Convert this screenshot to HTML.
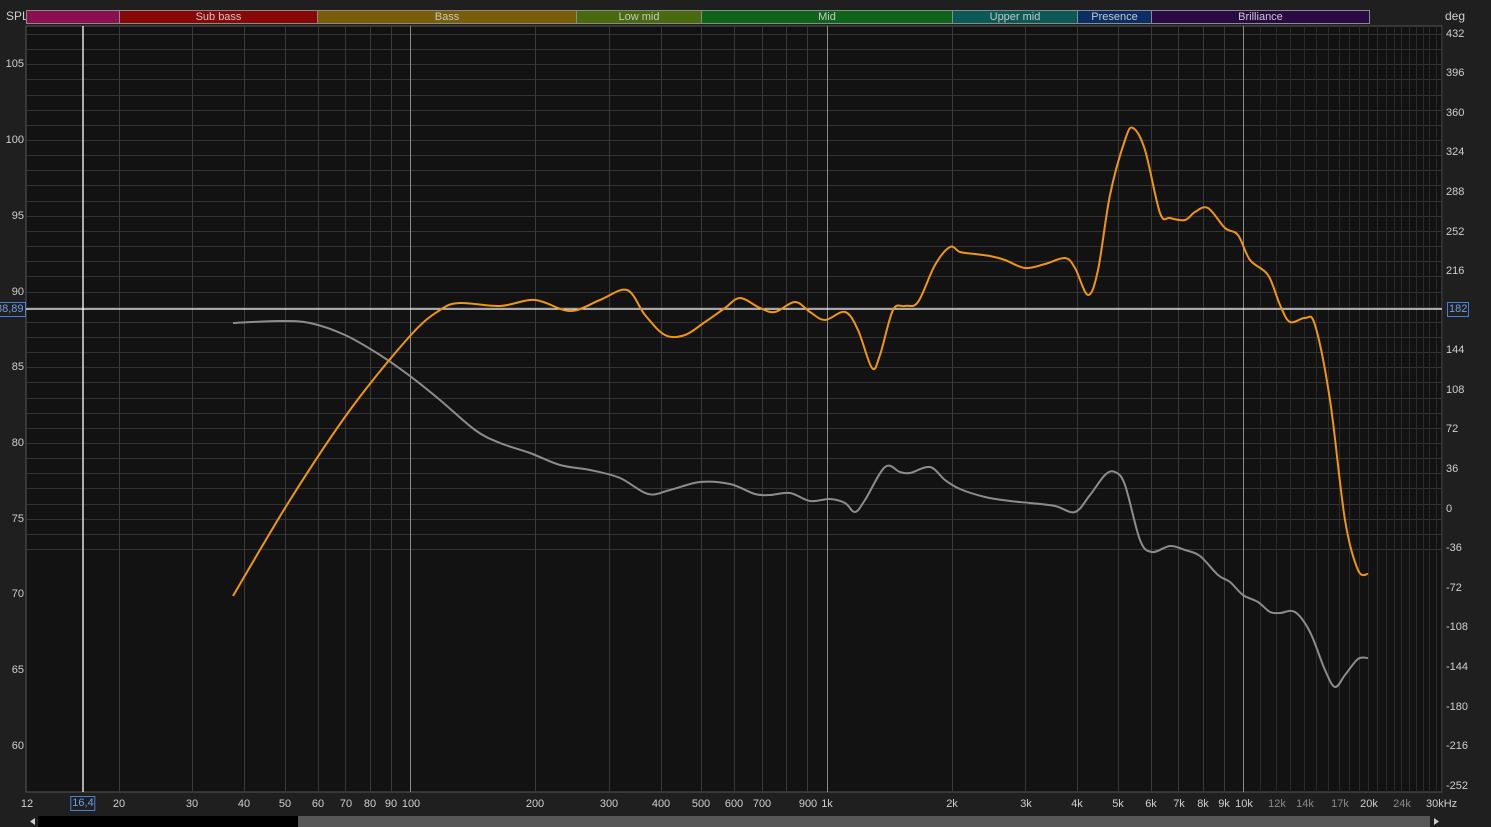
<!DOCTYPE html>
<html><head><meta charset="utf-8"><style>
html,body{margin:0;padding:0;background:#1f1f1f;width:1491px;height:827px;overflow:hidden;font-family:"Liberation Sans",sans-serif;}
.l{position:absolute;font-size:11px;color:#cfcfcf;line-height:12px;white-space:nowrap}
.ly{right:1467px;text-align:right}
.ry{left:1446px}
.bx{transform:translateX(-50%)}
.band{position:absolute;top:10px;height:12px;border:1px solid #8a8a8a;box-sizing:content-box;color:#c8c8c8;font-size:11px;line-height:12px;text-align:center}
.box{position:absolute;border:1px solid #4a7fd6;color:#6f9ee8;font-size:11px;line-height:13px;padding:0 1px;background:#1f1f1f}
.dim{color:#8a8a8a}
</style></head><body>
<svg id="g" width="1491" height="827" style="position:absolute;left:0;top:0">
<rect x="26" y="26" width="1416" height="766" fill="#121212" stroke="#555" stroke-width="1"/>
<g id="grid"></g>
<line x1="26" y1="309" x2="1442" y2="309" stroke="#fff" stroke-width="1.3"/>
<line x1="83" y1="26" x2="83" y2="792" stroke="#fff" stroke-width="1.3"/>
<path id="gray" fill="none" stroke="#8c8c8c" stroke-width="2"/>
<path id="orange" fill="none" stroke="#f0960f" stroke-width="2"/>
<rect x="38" y="816" width="260" height="11" fill="#000"/>
<rect x="298" y="816" width="1132" height="11" fill="#575757"/>
<polygon points="35,818 35,825 30,821.5" fill="#ccc"/>
<polygon points="1434,818 1434,825 1439,821.5" fill="#ccc"/>
</svg>
<div class="l" style="left:6px;top:10px;font-size:12px">SPL</div>
<div class="l" style="left:1445px;top:10px;font-size:12px">deg</div>
<div class="band" style="left:26px;width:92px;background:#8c0f4f"></div>
<div class="band" style="left:119px;width:197px;background:#880808">Sub bass</div>
<div class="band" style="left:317px;width:258px;background:#7a5d08">Bass</div>
<div class="band" style="left:576px;width:124px;background:#4a6a0e">Low mid</div>
<div class="band" style="left:701px;width:250px;background:#0e651a">Mid</div>
<div class="band" style="left:952px;width:124px;background:#0b5a55">Upper mid</div>
<div class="band" style="left:1077px;width:73px;background:#0b2e66">Presence</div>
<div class="band" style="left:1151px;width:217px;background:#2a0a45">Brilliance</div>

<div class="l ly" style="top:58px">105</div>
<div class="l ly" style="top:134px">100</div>
<div class="l ly" style="top:210px">95</div>
<div class="l ly" style="top:286px">90</div>
<div class="l ly" style="top:361px">85</div>
<div class="l ly" style="top:437px">80</div>
<div class="l ly" style="top:513px">75</div>
<div class="l ly" style="top:588px">70</div>
<div class="l ly" style="top:664px">65</div>
<div class="l ly" style="top:740px">60</div>
<div class="box" style="left:-6px;top:302px">88,89</div>

<div class="l ry" style="top:28px">432</div>
<div class="l ry" style="top:67px">396</div>
<div class="l ry" style="top:107px">360</div>
<div class="l ry" style="top:146px">324</div>
<div class="l ry" style="top:186px">288</div>
<div class="l ry" style="top:226px">252</div>
<div class="l ry" style="top:265px">216</div>
<div class="box" style="left:1447px;top:302px">182</div>
<div class="l ry" style="top:344px">144</div>
<div class="l ry" style="top:384px">108</div>
<div class="l ry" style="top:423px">72</div>
<div class="l ry" style="top:463px">36</div>
<div class="l ry" style="top:503px">0</div>
<div class="l ry" style="top:542px">-36</div>
<div class="l ry" style="top:582px">-72</div>
<div class="l ry" style="top:621px">-108</div>
<div class="l ry" style="top:661px">-144</div>
<div class="l ry" style="top:701px">-180</div>
<div class="l ry" style="top:740px">-216</div>
<div class="l ry" style="top:780px">-252</div>

<div class="l bx" style="left:27px;top:798px">12</div>
<div class="box bx" style="left:83px;top:796px">16,4</div>
<div class="l bx" style="left:119px;top:798px">20</div>
<div class="l bx" style="left:192px;top:798px">30</div>
<div class="l bx" style="left:244px;top:798px">40</div>
<div class="l bx" style="left:285px;top:798px">50</div>
<div class="l bx" style="left:318px;top:798px">60</div>
<div class="l bx" style="left:346px;top:798px">70</div>
<div class="l bx" style="left:370px;top:798px">80</div>
<div class="l bx" style="left:391px;top:798px">90</div>
<div class="l bx" style="left:411px;top:798px">100</div>
<div class="l bx" style="left:535px;top:798px">200</div>
<div class="l bx" style="left:609px;top:798px">300</div>
<div class="l bx" style="left:661px;top:798px">400</div>
<div class="l bx" style="left:701px;top:798px">500</div>
<div class="l bx" style="left:734px;top:798px">600</div>
<div class="l bx" style="left:762px;top:798px">700</div>
<div class="l bx" style="left:808px;top:798px">900</div>
<div class="l bx" style="left:827px;top:798px">1k</div>
<div class="l bx" style="left:952px;top:798px">2k</div>
<div class="l bx" style="left:1026px;top:798px">3k</div>
<div class="l bx" style="left:1077px;top:798px">4k</div>
<div class="l bx" style="left:1118px;top:798px">5k</div>
<div class="l bx" style="left:1151px;top:798px">6k</div>
<div class="l bx" style="left:1179px;top:798px">7k</div>
<div class="l bx" style="left:1203px;top:798px">8k</div>
<div class="l bx" style="left:1224px;top:798px">9k</div>
<div class="l bx" style="left:1244px;top:798px">10k</div>
<div class="l bx dim" style="left:1277px;top:798px">12k</div>
<div class="l bx dim" style="left:1305px;top:798px">14k</div>
<div class="l bx dim" style="left:1340px;top:798px">17k</div>
<div class="l bx" style="left:1369px;top:798px">20k</div>
<div class="l bx dim" style="left:1402px;top:798px">24k</div>
<div class="l" style="left:1426px;top:798px">30kHz</div>

<script>
var NS="http://www.w3.org/2000/svg",g=document.getElementById("grid");
function ln(x1,y1,x2,y2,c){var e=document.createElementNS(NS,"line");e.setAttribute("x1",x1);e.setAttribute("y1",y1);e.setAttribute("x2",x2);e.setAttribute("y2",y2);e.setAttribute("stroke",c);e.setAttribute("stroke-width","1");g.appendChild(e);}
function fx(f){return 410+416.5*Math.log10(f/100);}
for(var d=-17;d<=50;d++){var y=Math.round(291.5-(d)*15.15)+0.5; if(y>26&&y<792) ln(26,y,1442,y,"#333");}
var fs=[];for(var f=20;f<=90;f+=10)fs.push(f);for(f=200;f<=900;f+=100)fs.push(f);for(f=2000;f<=9000;f+=1000)fs.push(f);for(f=11000;f<=30000;f+=1000)fs.push(f);
fs.forEach(function(f){var x=Math.round(fx(f))+0.5;ln(x,26,x,792,f>=11000?"#2c2c2c":"#3a3a3a");});
[100,1000,10000].forEach(function(f){var x=Math.round(fx(f))+0.5;ln(x,26,x,792,"#8a8a8a");});
function cr(p){var s="M"+p[0][0]+","+p[0][1];for(var i=0;i<p.length-1;i++){var p0=p[i-1]||p[i],p1=p[i],p2=p[i+1],p3=p[i+2]||p2;s+=" C"+(p1[0]+(p2[0]-p0[0])/6)+","+(p1[1]+(p2[1]-p0[1])/6)+" "+(p2[0]-(p3[0]-p1[0])/6)+","+(p2[1]-(p3[1]-p1[1])/6)+" "+p2[0]+","+p2[1];}return s;}
var O=[[233,596],[290,500],[350,410],[410,336],[440,310],[460,303],[500,306],[535,300],[570,311],[600,300],[627,290],[645,315],[665,335],[685,335],[705,322],[725,308],[740,298],[760,308],[775,312],[795,302],[810,312],[825,320],[845,312],[858,330],[872,368],[880,355],[893,310],[905,306],[918,302],[935,265],[950,247],[960,252],[975,254],[990,256],[1005,260],[1025,268],[1045,264],[1065,258],[1075,268],[1088,295],[1098,270],[1110,195],[1125,140],[1133,128],[1145,150],[1160,213],[1170,218],[1185,220],[1195,212],[1208,208],[1225,228],[1238,235],[1250,260],[1268,275],[1280,305],[1290,322],[1305,318],[1315,325],[1330,400],[1345,520],[1358,570],[1368,574]];
var G=[[233,323],[280,321],[310,323],[345,335],[380,355],[410,376],[440,400],[475,430],[500,443],[530,453],[560,465],[590,470],[620,478],[648,494],[670,490],[700,482],[730,484],[755,494],[770,495],[790,493],[810,501],[830,499],[845,503],[855,512],[865,500],[885,467],[900,472],[910,473],[930,467],[945,480],[960,489],[985,497],[1010,501],[1030,503],[1055,506],[1075,512],[1090,495],[1105,475],[1115,472],[1125,485],[1140,540],[1152,552],[1170,546],[1185,550],[1200,556],[1218,575],[1230,582],[1243,595],[1258,602],[1270,612],[1280,613],[1295,612],[1310,632],[1325,670],[1335,687],[1345,675],[1358,659],[1368,658]];
document.getElementById("orange").setAttribute("d",cr(O));
document.getElementById("gray").setAttribute("d",cr(G));
</script>
</body></html>
